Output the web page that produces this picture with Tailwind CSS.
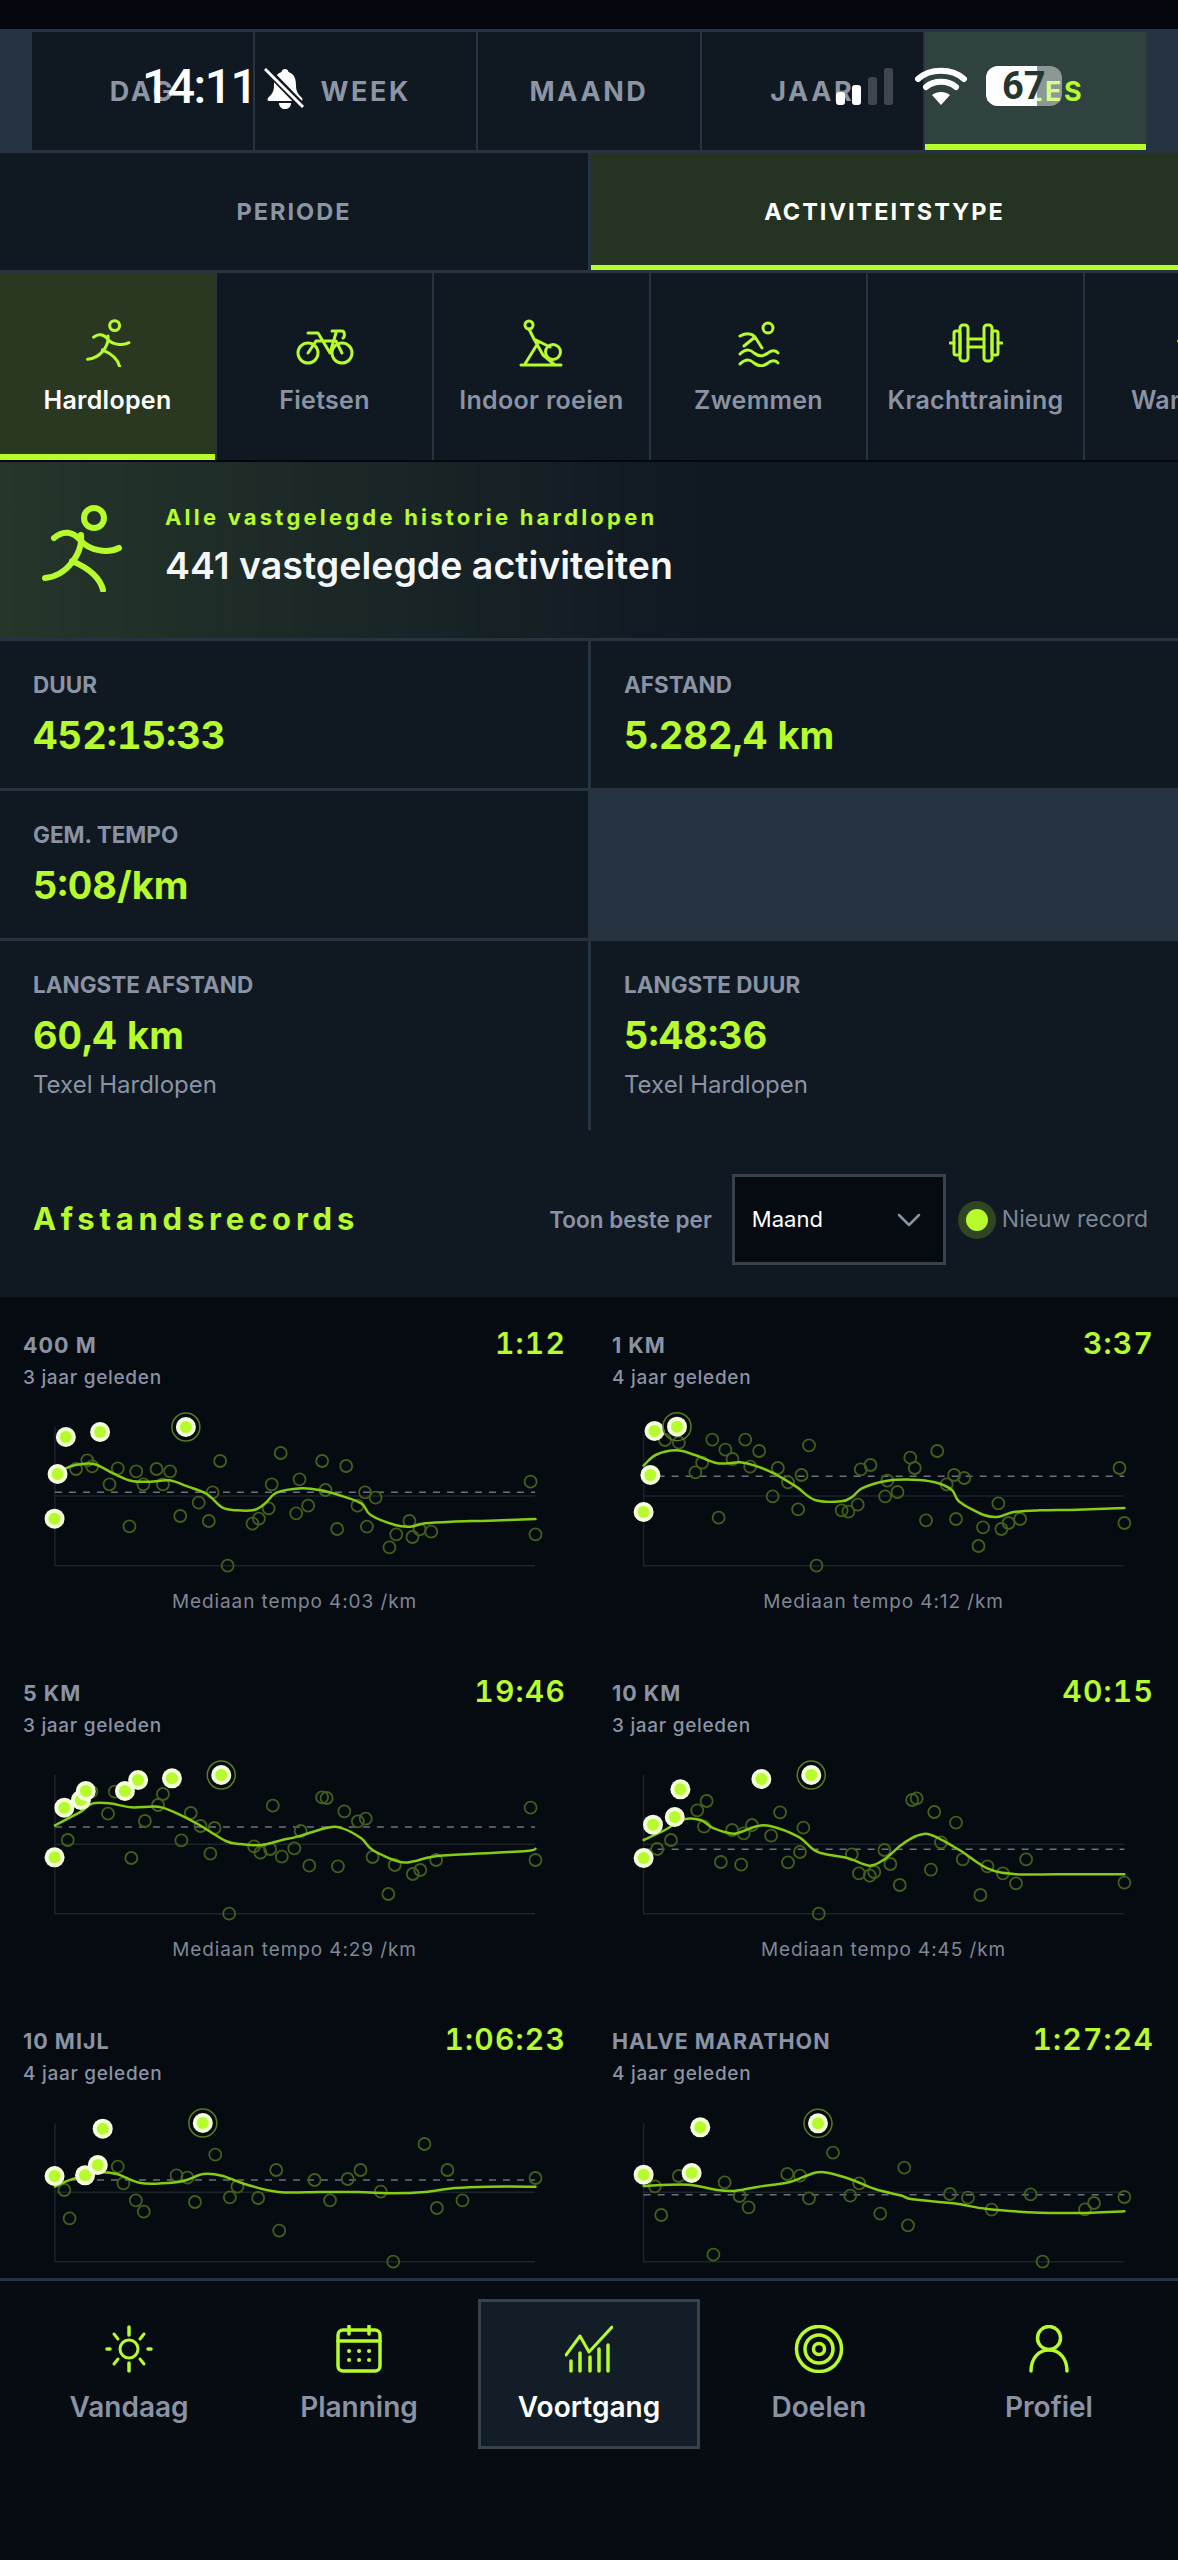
<!DOCTYPE html>
<html lang="nl">
<head>
    <meta charset="UTF-8">
    <meta name="viewport" content="width=device-width, initial-scale=1.0">
    <title>Voortgang</title>
    <script src="https://cdn.jsdelivr.net/npm/@tailwindcss/browser@4"></script>
</head>
<body class="bg-[#060a11]">
<div class="relative w-[1178px] h-[2560px] overflow-hidden flex flex-col bg-[#060a11] font-['Inter',sans-serif] text-[#8a93a3]">

    <!-- Status bar, lies over the tabs -->
    <div class="absolute left-0 top-0 w-full h-[120px] z-10 text-white">
        <div class="absolute left-[142px] top-[58px] text-[48px] leading-[58px] font-medium tracking-[-1.5px] font-['Roboto',sans-serif]">14:11</div>
        <svg class="absolute left-[264px] top-[66px]" width="42" height="44" viewBox="0 0 42 44" fill="none">
            <path d="M21 3c-2 0-3 1-3.500 3C11 8 10 14 10 20c0 6-3 9-6 12-1 1-.5 3 1 3h32c1.500 0 2-2 1-3-3-3-6-6-6-12 0-6-1-12-7.500-14C24 4 23 3 21 3z" fill="white"/>
            <path d="M15 37h12c0 4-3 6-6 6s-6-2-6-6z" fill="white"/>
            <path d="M2 3l36 37" stroke="#101822" stroke-width="7"/>
            <path d="M1 3l38 38" stroke="white" stroke-width="3"/>
        </svg>
        <div class="absolute left-[836px] top-[68px] flex items-end gap-[7px] h-[37px]">
            <div class="w-[9px] h-[13px] rounded-[3px] bg-white"></div>
            <div class="w-[9px] h-[20px] rounded-[3px] bg-white"></div>
            <div class="w-[9px] h-[28px] rounded-[3px] bg-white/20"></div>
            <div class="w-[9px] h-[37px] rounded-[3px] bg-white/20"></div>
        </div>
        <svg class="absolute left-[915px] top-[66px]" width="52" height="40" viewBox="0 0 52 40" fill="none">
            <path d="M3 13C15 2 37 2 49 13" stroke="white" stroke-width="6" stroke-linecap="round"/>
            <path d="M11 21c8-7 22-7 30 0" stroke="white" stroke-width="6" stroke-linecap="round"/>
            <path d="M26 39l-9-10c5-4 13-4 18 0z" fill="white"/>
        </svg>
        <div class="absolute left-[986px] top-[66px] w-[76px] h-[40px] rounded-[12px] overflow-hidden bg-white/45">
            <div class="w-[51px] h-full bg-white"></div>
            <div class="absolute inset-0 pl-[16px] text-[#24362f] text-[38px] leading-[40px] font-bold font-['Roboto',sans-serif]">67</div>
        </div>
    </div>

    <div class="h-[29px] shrink-0 bg-[#04070e]"></div>

    <!-- Period tabs -->
    <div class="h-[124px] shrink-0 px-[32px] grid grid-cols-5 gap-[2px] bg-[#263340] py-[3px] text-[27px] font-bold tracking-[2.600px] text-[#8c95a3]">
        <div class="bg-[#101822] flex items-center justify-center pt-[2px]">DAG</div>
        <div class="bg-[#101822] flex items-center justify-center pt-[2px]">WEEK</div>
        <div class="bg-[#101822] flex items-center justify-center pt-[2px]">MAAND</div>
        <div class="bg-[#101822] flex items-center justify-center pt-[2px]">JAAR</div>
        <div class="bg-[#2f4240] border-b-[6px] border-[#b6fb2b] flex items-center justify-center pt-[8px] text-[#b6fb2b]">ALLES</div>
    </div>

    <!-- Filter mode -->
    <div class="h-[117px] shrink-0 grid grid-cols-[588px_1fr] gap-[3px] bg-[#263340] text-[23.500px] font-bold tracking-[2px]">
        <div class="bg-[#101822] flex items-center justify-center text-[#8c95a3]">PERIODE</div>
        <div class="bg-[#253322] border-b-[5px] border-[#b6fb2b] flex items-center justify-center pt-[5px] text-white">ACTIVITEITSTYPE</div>
    </div>
    <div class="h-[3px] shrink-0 bg-[#263340]"></div>

    <!-- Activity types -->
    <div class="h-[187px] shrink-0 flex gap-[2px] overflow-hidden bg-[#263340] text-[25px] tracking-[0.300px] font-semibold">
        <div class="w-[215px] shrink-0 bg-[#2a3821] border-b-[6px] border-[#b6fb2b] flex flex-col items-center pt-[46px] text-white">
            <svg width="46" height="48" viewBox="0 0 80 87" fill="none" stroke="#b6fb2b" stroke-width="5.500" stroke-linecap="round">
                <circle cx="52" cy="12" r="9"/>
                <path d="M14 33c8-7 18-6 26 4 8 9 26 12 38 6M40 31c2 18-14 40-37 42M30 56c14 6 28 16 31 30"/>
            </svg>
            <span class="mt-[19px] leading-[28px]">Hardlopen</span>
        </div>
        <div class="w-[215px] shrink-0 bg-[#101822] flex flex-col items-center pt-[46px]">
            <svg width="58" height="48" viewBox="0 0 58 48" fill="none" stroke="#b6fb2b" stroke-width="3" stroke-linecap="round" stroke-linejoin="round">
                <circle cx="12" cy="34" r="10"/><circle cx="46" cy="34" r="10"/>
                <path d="M14 14h8l12 20M20 22l-8 12M20 22h20l6 12M34 34l6-20M36 12h10c3 0 3 6 1 7M12 14h10"/>
            </svg>
            <span class="mt-[19px] leading-[28px]">Fietsen</span>
        </div>
        <div class="w-[215px] shrink-0 bg-[#101822] flex flex-col items-center pt-[46px]">
            <svg width="46" height="48" viewBox="0 0 46 48" fill="none" stroke="#b6fb2b" stroke-width="3" stroke-linecap="round" stroke-linejoin="round">
                <circle cx="10" cy="6" r="4"/><circle cx="34" cy="33" r="7.500"/>
                <path d="M10 10l5 10 16 8M15 20l9 16M19 24L6 45M2 46h40M24 36l12 10"/>
            </svg>
            <span class="mt-[19px] leading-[28px] whitespace-nowrap">Indoor roeien</span>
        </div>
        <div class="w-[215px] shrink-0 bg-[#101822] flex flex-col items-center pt-[46px]">
            <svg width="46" height="48" viewBox="0 0 46 48" fill="none" stroke="#b6fb2b" stroke-width="3" stroke-linecap="round" stroke-linejoin="round">
                <circle cx="32" cy="9" r="5"/>
                <path d="M4 17c6-3 12-3 15 1l7 11M19 18L8 27M4 35c5-5 10-5 14-1 5 4 9 4 14 0 3-3 8-3 10 0M4 45c5-5 10-5 14-1 5 4 9 4 14 0 3-3 8-3 10 0"/>
            </svg>
            <span class="mt-[19px] leading-[28px]">Zwemmen</span>
        </div>
        <div class="w-[215px] shrink-0 bg-[#101822] flex flex-col items-center pt-[46px]">
            <svg width="54" height="48" viewBox="0 0 54 48" fill="none" stroke="#b6fb2b" stroke-width="3" stroke-linecap="round" stroke-linejoin="round">
                <rect x="5" y="12" width="6" height="24" rx="2"/><rect x="11" y="6" width="8" height="36" rx="3"/>
                <rect x="35" y="6" width="8" height="36" rx="3"/><rect x="43" y="12" width="6" height="24" rx="2"/>
                <path d="M19 20h16M19 28h16M1 24h4M49 24h4"/>
            </svg>
            <span class="mt-[19px] leading-[28px] whitespace-nowrap">Krachttraining</span>
        </div>
        <div class="w-[215px] shrink-0 bg-[#101822] flex flex-col items-center pt-[46px]">
            <svg width="46" height="48" viewBox="0 0 80 87" fill="none" stroke="#b6fb2b" stroke-width="5.500" stroke-linecap="round">
                <circle cx="52" cy="12" r="9"/>
                <path d="M14 40c8-10 18-12 26-8 6 9 16 14 28 14M40 31c2 18-10 36-22 54M34 56c14 6 24 16 27 30"/>
            </svg>
            <span class="mt-[19px] leading-[28px]">Wandelen</span>
        </div>
    </div>
    <div class="h-[2px] shrink-0 bg-[#04070e]"></div>

    <!-- Summary banner -->
    <div class="h-[176px] shrink-0 flex items-center gap-[43px] pl-[42px] bg-linear-to-r from-[#26362a] to-[#101822] to-60%">
        <svg class="shrink-0 -mt-[3px]" width="80" height="87" viewBox="0 0 80 87" fill="none" stroke="#b6fb2b" stroke-width="6" stroke-linecap="round">
            <circle cx="52" cy="13" r="10"/>
            <path d="M12 33c9-8 19-7 27 3 8 9 26 13 38 7M39 30c2 18-14 41-36 43M30 56c14 6 28 16 31 29"/>
        </svg>
        <div class="-mt-[9px]">
            <div class="text-[22px] leading-[26px] font-bold tracking-[3.200px] text-[#b6fb2b]">Alle vastgelegde historie hardlopen</div>
            <div class="mt-[14px] text-[37.500px] leading-[44px] font-semibold text-[#f4f6f8]">441 vastgelegde activiteiten</div>
        </div>
    </div>
    <div class="h-[3px] shrink-0 bg-[#263340]"></div>

    <!-- Stats -->
    <div class="shrink-0 grid grid-cols-[588px_1fr] grid-rows-[147px_147px_189px] gap-[3px] bg-[#263340]">
        <div class="bg-[#101822] pl-[33px] pt-[32px]">
            <div class="text-[22.500px] leading-[24px] font-bold">DUUR</div>
            <div class="mt-[17px] text-[38px] leading-[42px] font-bold tabular-nums text-[#b6fb2b]">452:15:33</div>
        </div>
        <div class="bg-[#101822] pl-[33px] pt-[32px]">
            <div class="text-[22.500px] leading-[24px] font-bold">AFSTAND</div>
            <div class="mt-[17px] text-[38px] leading-[42px] font-bold tabular-nums text-[#b6fb2b]">5.282,4 km</div>
        </div>
        <div class="bg-[#101822] pl-[33px] pt-[32px]">
            <div class="text-[22.500px] leading-[24px] font-bold">GEM. TEMPO</div>
            <div class="mt-[17px] text-[38px] leading-[42px] font-bold tabular-nums text-[#b6fb2b]">5:08/km</div>
        </div>
        <div></div>
        <div class="bg-[#101822] pl-[33px] pt-[32px]">
            <div class="text-[22.500px] leading-[24px] font-bold">LANGSTE AFSTAND</div>
            <div class="mt-[17px] text-[38px] leading-[42px] font-bold tabular-nums text-[#b6fb2b]">60,4 km</div>
            <div class="mt-[15px] text-[24px] leading-[28px]">Texel Hardlopen</div>
        </div>
        <div class="bg-[#101822] pl-[33px] pt-[32px]">
            <div class="text-[22.500px] leading-[24px] font-bold">LANGSTE DUUR</div>
            <div class="mt-[17px] text-[38px] leading-[42px] font-bold tabular-nums text-[#b6fb2b]">5:48:36</div>
            <div class="mt-[15px] text-[24px] leading-[28px]">Texel Hardlopen</div>
        </div>
    </div>

    <!-- Records header -->
    <div class="h-[167px] shrink-0 flex items-center pt-[44px] pb-[32px] pl-[33px] pr-[30px] bg-[#101822]">
        <div class="text-[31px] font-bold tracking-[4.800px] text-[#b6fb2b]">Afstandsrecords</div>
        <div class="ml-auto text-[22.500px] font-semibold whitespace-nowrap">Toon beste per</div>
        <div class="ml-[20px] w-[214px] h-[91px] border-[3px] border-[#36434f] bg-[#060a11] flex items-center justify-between pl-[17px] pr-[22px]">
            <span class="text-[22px] text-white">Maand</span>
            <svg width="24" height="14" viewBox="0 0 24 14" fill="none" stroke="#8a93a3" stroke-width="2.500" stroke-linecap="round" stroke-linejoin="round"><path d="M2 2l10 10L22 2"/></svg>
        </div>
        <div class="ml-[12px] w-[38px] h-[38px] rounded-full bg-[#b6fb2b]/20 flex items-center justify-center">
            <div class="w-[22px] h-[22px] rounded-full bg-[#b6fb2b]"></div>
        </div>
        <div class="ml-[6px] text-[23px] text-[#7d8694] whitespace-nowrap">Nieuw record</div>
    </div>

    <!-- Record charts -->
    <div id="records" class="flex-1 min-h-0 overflow-hidden grid grid-cols-2 auto-rows-[348px] content-start bg-[#060a11]"></div>

    <!-- Bottom navigation -->
    <nav class="h-[282px] shrink-0 border-t-[3px] border-[#263340] bg-[#070b12] px-[18px] pt-[18px] flex gap-[8px] items-start text-[28px] font-semibold">
        <div class="w-[222px] h-[150px] border-[3px] border-transparent flex flex-col items-center pt-[23px]">
            <svg width="50" height="48" viewBox="0 0 50 48" fill="none" stroke="#b6fb2b" stroke-width="3" stroke-linecap="round">
                <circle cx="25" cy="24" r="9"/>
                <path d="M25 2v8M25 38v8M3 24h3M44 24h3" stroke-width="3.500"/>
                <path d="M10 9l4 5M40 9l-4 5M10 39l4-5M40 39l-4-5"/>
            </svg>
            <span class="mt-[18px] leading-[32px]">Vandaag</span>
        </div>
        <div class="w-[222px] h-[150px] border-[3px] border-transparent flex flex-col items-center pt-[23px]">
            <svg width="46" height="48" viewBox="0 0 46 48" fill="none" stroke="#b6fb2b" stroke-width="3.500" stroke-linecap="round">
                <rect x="2" y="5" width="42" height="41" rx="5"/>
                <path d="M2 16h42M13 1v8M33 1v8"/>
                <path d="M13 26h.1M23 26h.1M33 26h.1M13 35h.1M23 35h.1M33 35h.1" stroke-width="4"/>
            </svg>
            <span class="mt-[18px] leading-[32px]">Planning</span>
        </div>
        <div class="w-[222px] h-[150px] border-[3px] border-[#36434f] bg-[#131d27] flex flex-col items-center pt-[23px] text-white">
            <svg width="48" height="48" viewBox="0 0 48 48" fill="none" stroke="#b6fb2b" stroke-width="3" stroke-linecap="round" stroke-linejoin="round">
                <path d="M1 30l14-19 9 16L47 2"/>
                <path d="M6 46V36M15 46V28M25 46V32M34 46V24M43 46V20" stroke-width="3.500"/>
            </svg>
            <span class="mt-[18px] leading-[32px]">Voortgang</span>
        </div>
        <div class="w-[222px] h-[150px] border-[3px] border-transparent flex flex-col items-center pt-[23px]">
            <svg width="50" height="48" viewBox="0 0 50 48" fill="none" stroke="#b6fb2b" stroke-width="3.500">
                <circle cx="25" cy="24" r="22.500"/><circle cx="25" cy="24" r="14"/><circle cx="25" cy="24" r="5.500"/>
            </svg>
            <span class="mt-[18px] leading-[32px]">Doelen</span>
        </div>
        <div class="w-[222px] h-[150px] border-[3px] border-transparent flex flex-col items-center pt-[23px]">
            <svg width="40" height="48" viewBox="0 0 40 48" fill="none" stroke="#b6fb2b" stroke-width="3.500" stroke-linecap="round">
                <ellipse cx="20" cy="13" rx="11.500" ry="11.500"/>
                <path d="M2 46c0-12 7-21 18-21s18 9 18 21"/>
            </svg>
            <span class="mt-[18px] leading-[32px]">Profiel</span>
        </div>
    </nav>
</div>

<script>
    // Points are read off 590x340 crops, so x is squeezed back and y divided by 3
    const records = [
        { title: '400 M', ago: '3 jaar geleden', time: '1:12', median: '4:03', dy: 3, axisX: 146, axisTop: 380, base: 797, solid: 588, dash: 577,
          best: [494, 381], hits: [[175,411],[266,396],[153,522],[145,656]],
          pts: [[202,507],[232,481],[245,499],[313,505],[291,553],[362,514],[381,553],[416,507],[433,553],[452,514],[585,483],[565,577],[528,608],[479,648],[555,663],[344,679],[605,797],[746,459],[722,553],[796,538],[856,483],[920,498],[865,570],[714,625],[688,656],[671,671],[787,640],[819,617],[896,687],[970,577],[998,593],[950,617],[975,680],[1410,545],[1423,703],[1088,663],[1053,703],[1096,711],[1115,688],[1146,695],[1035,742]],
          line: [[175,505],[200,495],[250,492],[300,520],[350,543],[400,545],[450,541],[500,560],[550,582],[590,622],[630,631],[675,630],[705,610],[735,578],[800,565],[850,570],[900,585],[960,610],[985,645],[1050,675],[1090,680],[1130,670],[1200,665],[1300,662],[1423,657]] },
        { title: '1 KM', ago: '4 jaar geleden', time: '3:37', median: '4:12', dy: 3, axisX: 143, axisTop: 400, base: 797, solid: 588, dash: 529,
          best: [232, 380], hits: [[172,393],[161,525],[143,636]],
          pts: [[200,420],[237,428],[326,419],[414,419],[361,449],[451,453],[380,477],[299,488],[281,517],[427,500],[501,504],[528,547],[564,525],[584,436],[487,589],[555,628],[343,653],[604,797],[671,631],[689,635],[714,614],[722,508],[748,495],[793,542],[787,589],[820,576],[854,473],[866,504],[926,453],[951,553],[971,525],[998,534],[896,661],[976,657],[1089,610],[1048,682],[1097,687],[1116,669],[1147,657],[1036,738],[1412,504],[1425,669]],
          line: [[143,497],[175,465],[230,451],[280,465],[340,490],[400,487],[440,497],[490,520],[550,560],[600,600],[670,604],[700,590],[725,565],[790,543],[860,539],[920,547],[965,570],[985,605],[1050,645],[1090,650],[1130,636],[1200,631],[1300,629],[1425,624]] },
        { title: '5 KM', ago: '3 jaar geleden', time: '19:46', median: '4:29', dy: 5, axisX: 146, axisTop: 375, base: 791, solid: 583, dash: 531,
          best: [588, 375], hits: [[171,473],[215,450],[228,423],[332,423],[367,390],[457,385],[145,622]],
          pts: [[243,425],[305,425],[433,432],[420,465],[287,491],[385,513],[507,489],[533,528],[570,534],[482,571],[559,611],[180,570],[349,624],[609,791],[675,589],[692,608],[718,597],[749,620],[782,595],[799,543],[725,467],[856,442],[868,444],[915,484],[951,514],[972,506],[822,647],[898,649],[990,621],[1049,645],[1097,672],[1117,660],[1159,630],[1032,732],[1410,473],[1423,630]],
          line: [[146,526],[215,485],[245,461],[290,460],[350,472],[420,470],[470,490],[530,525],[600,573],[640,582],[695,585],[750,570],[790,560],[870,533],[910,535],[960,565],[990,600],[1060,635],[1100,634],[1150,620],[1250,612],[1400,603],[1423,596]] },
        { title: '10 KM', ago: '3 jaar geleden', time: '40:15', median: '4:45', dy: 5, axisX: 143, axisTop: 375, base: 791, solid: 583, dash: 598,
          best: [590, 375], hits: [[168,524],[226,501],[241,418],[143,624],[457,387]],
          pts: [[179,597],[216,570],[286,481],[311,453],[304,530],[379,540],[410,550],[432,525],[349,636],[403,644],[507,487],[483,557],[569,533],[560,606],[528,637],[610,791],[698,613],[717,670],[746,677],[758,666],[785,600],[801,642],[826,705],[859,450],[871,445],[918,486],[976,518],[936,577],[909,659],[994,628],[1060,649],[1101,670],[1136,700],[1163,628],[1041,735],[1425,698]],
          line: [[143,570],[200,540],[250,508],[295,510],[330,535],[385,551],[440,530],[480,528],[555,560],[600,602],[640,615],[690,625],[745,647],[785,628],[830,585],[870,558],[910,555],[985,600],[1060,655],[1130,672],[1250,673],[1425,673]] },
        { title: '10 MIJL', ago: '4 jaar geleden', time: '1:06:23', median: '', dy: -3, axisX: 146, axisTop: 400, base: 815, solid: 607, dash: 570,
          best: [539, 399], hits: [[145,558],[226,556],[260,525],[273,416]],
          pts: [[171,600],[185,685],[313,530],[328,580],[361,631],[382,665],[469,556],[498,563],[518,636],[572,494],[631,590],[611,622],[686,624],[734,540],[742,722],[836,570],[877,631],[924,567],[958,540],[1012,605],[1045,815],[1128,462],[1189,540],[1161,654],[1229,631],[1423,564]],
          line: [[146,590],[190,568],[260,548],[310,552],[370,578],[430,580],[490,572],[540,552],[590,557],[650,582],[740,606],[850,606],[950,606],[1050,610],[1130,606],[1210,594],[1300,590],[1423,590]] },
        { title: 'HALVE MARATHON', ago: '4 jaar geleden', time: '1:27:24', median: '', dy: -3, axisX: 143, axisTop: 400, base: 815, solid: 607, dash: 614,
          best: [608, 400], hits: [[143,554],[271,549],[294,412]],
          pts: [[173,589],[190,675],[237,558],[359,577],[399,618],[423,652],[329,794],[526,552],[560,557],[584,625],[648,488],[718,580],[694,617],[774,671],[838,533],[848,706],[960,612],[1008,623],[1071,659],[1175,613],[1207,815],[1320,658],[1344,639],[1425,621]],
          line: [[143,588],[260,584],[340,600],[390,602],[450,590],[530,577],[600,548],[640,550],[700,570],[760,597],[830,617],[860,628],[970,640],[1060,657],[1200,668],[1300,669],[1425,664]] }
    ];

    const SVG_TOP = 94;

    function smoothPath(points) {
        let d = `M${points[0][0]} ${points[0][1]}`;
        for (let i = 0; i < points.length - 1; i++) {
            const p0 = points[i - 1] || points[i];
            const p1 = points[i];
            const p2 = points[i + 1];
            const p3 = points[i + 2] || p2;
            d += `C${p1[0] + (p2[0] - p0[0]) / 6} ${p1[1] + (p2[1] - p0[1]) / 6} ${p2[0] - (p3[0] - p1[0]) / 6} ${p2[1] - (p3[1] - p1[1]) / 6} ${p2[0]} ${p2[1]}`;
        }
        return d;
    }

    function drawChart(r, isRight) {
        const X = x => isRight ? 1 + x * 0.375 : x * 0.3763;
        const Y = y => y / 3 + r.dy - SVG_TOP;
        const P = p => [X(p[0]), Y(p[1])];
        const endX = X(isRight ? 1425 : 1422);
        let s = '';
        s += `<path d="M${X(r.axisX)} ${Y(r.axisTop)}V${Y(r.base)}H${endX}M${X(r.axisX)} ${Y(r.solid)}H${endX}" stroke="#1d232b" stroke-width="1.500" fill="none"/>`;
        s += `<path d="M${X(r.axisX)} ${Y(r.dash)}H${endX}" stroke="#6b727c" stroke-width="1.500" stroke-dasharray="7 7" fill="none"/>`;
        r.pts.forEach(p => { s += `<circle cx="${X(p[0])}" cy="${Y(p[1])}" r="6" fill="none" stroke="#41601b" stroke-width="1.800"/>`; });
        s += `<path d="${smoothPath(r.line.map(P))}" fill="none" stroke="#86cc10" stroke-width="2.500" stroke-linecap="round"/>`;
        r.hits.concat([r.best]).forEach(p => {
            s += `<circle cx="${X(p[0])}" cy="${Y(p[1])}" r="10" fill="#f3fdd9"/><circle cx="${X(p[0])}" cy="${Y(p[1])}" r="6" fill="#b6fb2b"/>`;
        });
        s += `<circle cx="${X(r.best[0])}" cy="${Y(r.best[1])}" r="14" fill="none" stroke="#577a22" stroke-width="1.500"/>`;
        return s;
    }

    document.getElementById('records').innerHTML = records.map((r, i) => {
        const isRight = i % 2 === 1;
        return `
        <div class="h-[348px]">
            <div class="h-[94px] pt-[26px] flex justify-between items-start ${isRight ? 'pl-[23px] pr-[24px]' : 'pl-[23px] pr-[23px]'}">
                <div class="pt-[9px]">
                    <div class="text-[21.500px] leading-[26px] font-bold tracking-[1px]">${r.title}</div>
                    <div class="mt-[7px] text-[19px] leading-[26px] font-medium tracking-[0.700px]">${r.ago}</div>
                </div>
                <div class="text-[30px] leading-[40px] font-semibold tabular-nums tracking-[1.200px] text-[#b6fb2b]">${r.time}</div>
            </div>
            <svg class="overflow-visible" width="589" height="190" viewBox="0 0 589 190">${drawChart(r, isRight)}</svg>
            <div class="mt-[8px] text-center text-[19px] leading-[26px] tracking-[0.900px] text-[#7f8796]">${r.median ? 'Mediaan tempo ' + r.median + ' /km' : ''}</div>
        </div>`;
    }).join('');
</script>
</body>
</html>
